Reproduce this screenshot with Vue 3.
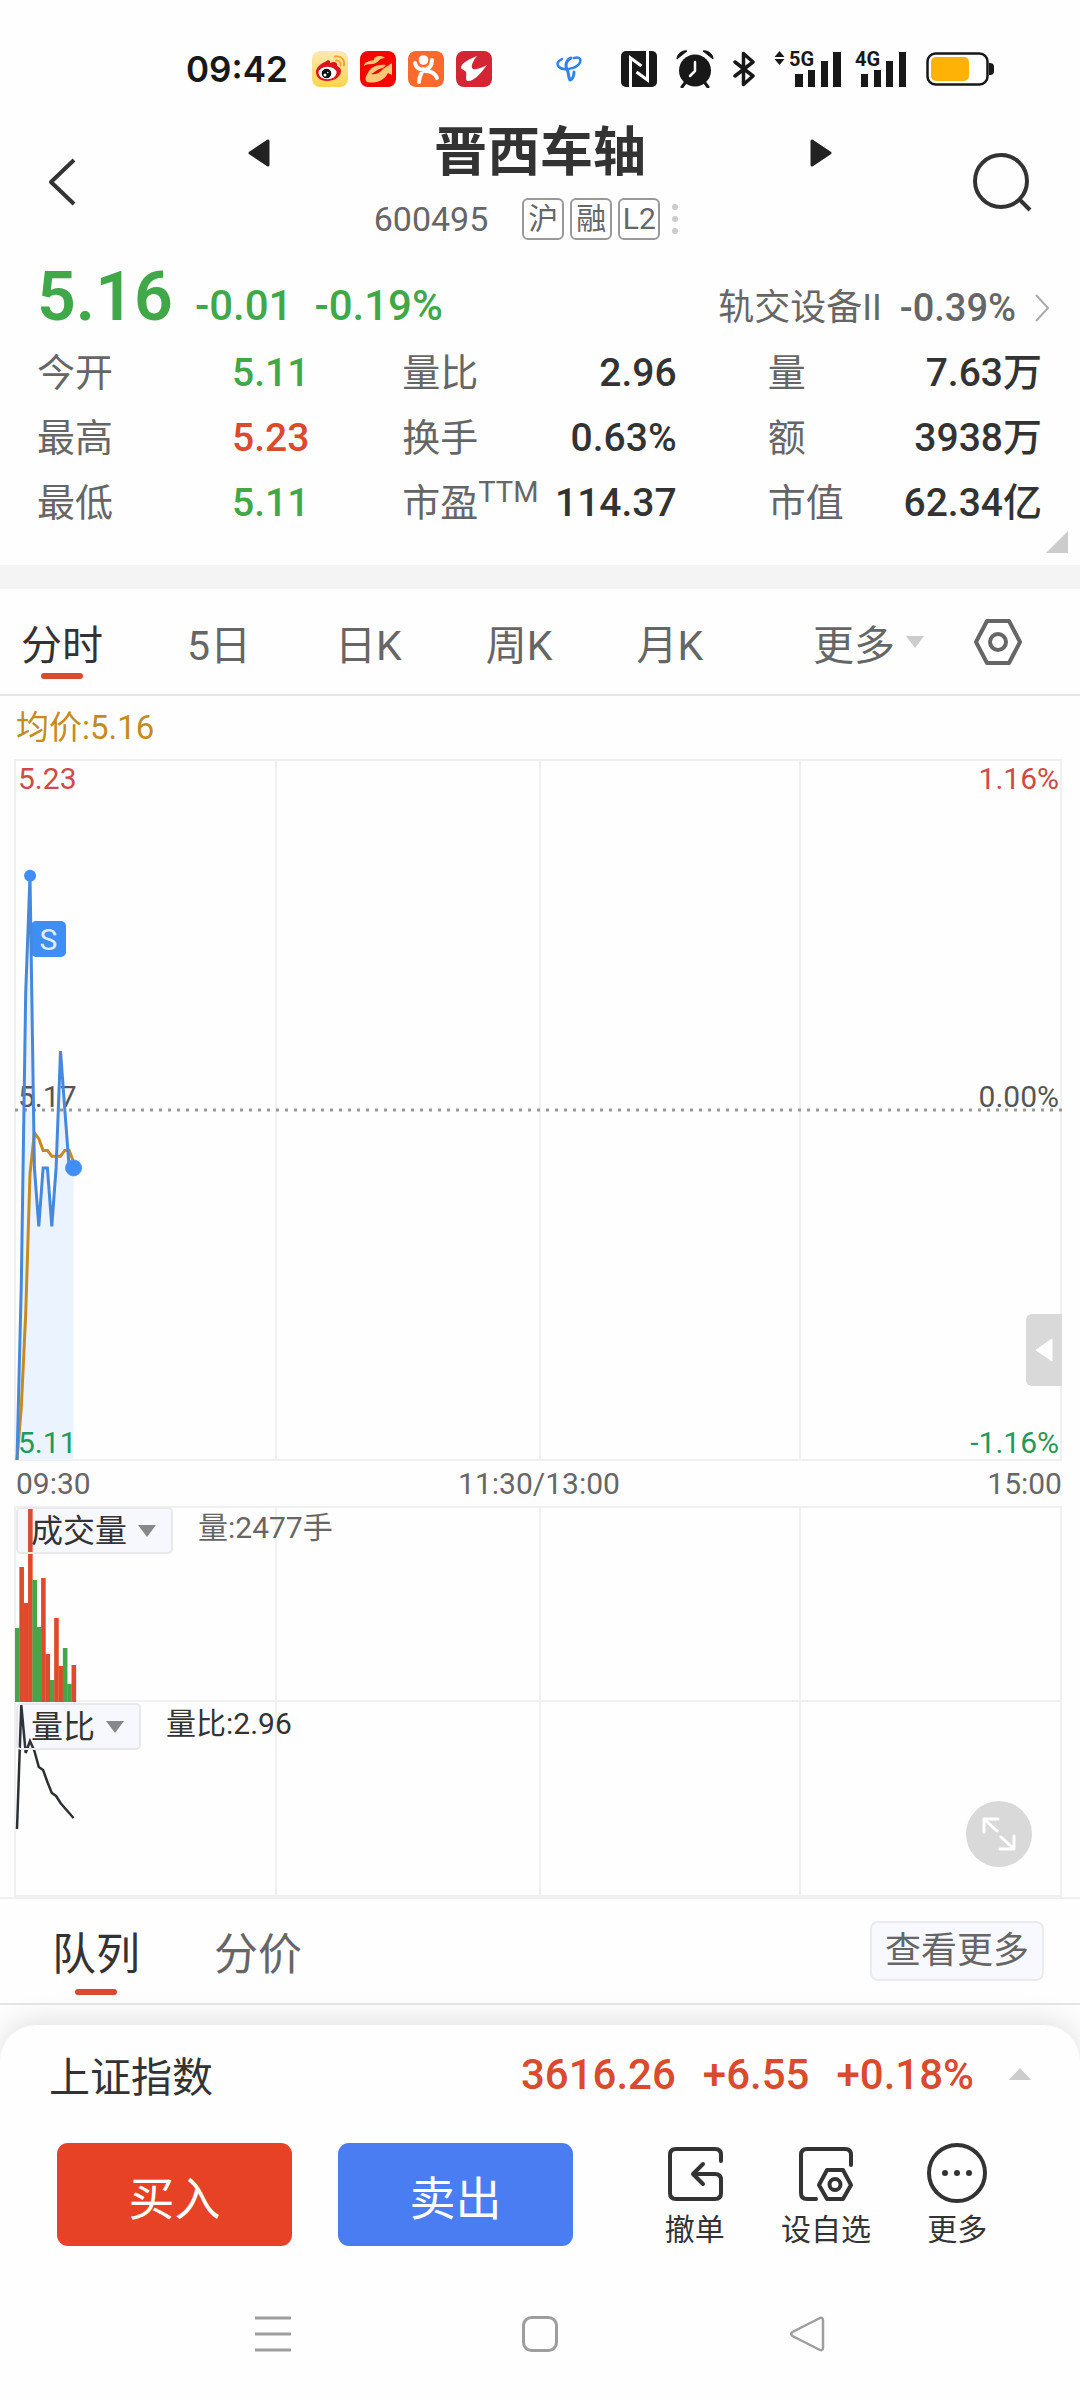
<script setup>
import { computed, ref } from 'vue'

const stats = [
  { label: '今开', value: '5.11', tone: 'down' },
  { label: '量比', value: '2.96' },
  { label: '量', value: '7.63万' },
  { label: '最高', value: '5.23', tone: 'up' },
  { label: '换手', value: '0.63%' },
  { label: '额', value: '3938万' },
  { label: '最低', value: '5.11', tone: 'down' },
  { label: '市盈', sup: 'TTM', value: '114.37' },
  { label: '市值', value: '62.34亿' },
]

const periods = ['分时', '5日', '日K', '周K', '月K']
const activePeriod = ref('分时')

const bookTabs = ['队列', '分价']
const activeBook = ref('队列')

const volumeIndicator = ref('成交量')
const ratioIndicator = ref('量比')

// one entry per minute since the open
const prices = [5.11, 5.14, 5.19, 5.21, 5.16, 5.15, 5.16, 5.16, 5.15, 5.16, 5.18, 5.17, 5.16, 5.16]
const averages = [5.11, 5.119, 5.135, 5.159, 5.166, 5.165, 5.163, 5.163, 5.162, 5.162, 5.162, 5.163, 5.163, 5.161]
const volumes = [
  [74, 'down'], [135, 'up'], [99, 'up'], [194, 'up'], [122, 'down'], [75, 'down'], [124, 'up'],
  [48, 'up'], [22, 'down'], [84, 'up'], [36, 'up'], [54, 'down'], [18, 'down'], [37, 'up'],
]
const ratios = [127, 3, 51, 39, 49, 65, 68, 80, 91, 94, 101, 106, 111, 116]

const STEP = 4.35
const gridX = [1, 262, 526, 786, 1047]

const px = (i) => 3 + i * STEP
const py = (price) => 701 - ((price - 5.11) / 0.12) * 701
const toPoints = (list, fy) => list.map((v, i) => `${px(i).toFixed(1)},${fy(v).toFixed(1)}`).join(' ')

const pricePoints = computed(() => toPoints(prices, py))
const averagePoints = computed(() => toPoints(averages, py))
const areaPoints = computed(() => `${px(0)},701 ${pricePoints.value} ${px(prices.length - 1)},701`)
const ratioPoints = computed(() => toPoints(ratios, (v) => v))
</script>

<template>
  <div class="page">
    <div class="status-bar">
      <span class="clock">09:42</span>
      <div class="app-icons">
        <svg viewBox="0 0 36 36" class="app-icon">
          <defs>
            <linearGradient id="weibo" x1="0" y1="0" x2="0" y2="1">
              <stop offset="0" stop-color="#fbe9b4" />
              <stop offset="1" stop-color="#fdd44c" />
            </linearGradient>
          </defs>
          <rect width="36" height="36" rx="8" fill="url(#weibo)" />
          <path d="M13 11c3-3 6-2 5 1c4-2 8-1 7 3c3 1 4 3 4 5c0 6-7 10-14 10S4 26 4 21c0-4 4-8 9-10z" fill="#d8141c" />
          <ellipse cx="15.500" cy="22" rx="9" ry="6.200" fill="#fff" />
          <circle cx="14.500" cy="22.500" r="4.800" fill="#111" />
          <circle cx="13" cy="24" r="1.500" fill="#fff" />
          <circle cx="15.800" cy="21.500" r=".8" fill="#fff" />
          <path d="M24 9.500c3-.5 5 2 4.500 5M23 5.500c7-1 10 4 9 9" fill="none" stroke="#f0a22c" stroke-width="1.800" stroke-linecap="round" />
        </svg>
        <svg viewBox="0 0 36 36" class="app-icon">
          <rect width="36" height="36" rx="8" fill="#f80400" />
          <path d="M4 15c0-4 5-5 10-6c0-3 3-4 6-4c3 0 4 1 5 2c-5 0-6 3-9 5c-4 2-8 0-12 3z" fill="#f9c877" />
          <path d="M8 22c2-5 8-9 18-8l-3 3c-4 0-8 4-12 6c3 1 8 0 12-5l9-6v12l-4-2c-4 8-13 11-21 9c-2-2-2-5 1-9z" fill="#f9c877" />
        </svg>
        <svg viewBox="0 0 36 36" class="app-icon">
          <rect width="36" height="36" rx="8" fill="#fb6a2c" />
          <circle cx="15.500" cy="9" r="4.800" fill="#fff" />
          <path d="M7 12c1 5 4 6 9 7c5-1 8-4 8-10M15 18c-1 5-4 6-4 13M17 20c6 0 10 2 12 7" fill="none" stroke="#fff" stroke-width="4" stroke-linecap="round" stroke-linejoin="round" />
        </svg>
        <svg viewBox="0 0 36 36" class="app-icon">
          <rect width="36" height="36" rx="8" fill="#d32533" />
          <path d="M21 5C13 8 6 12 5 16c0 3 4 3 5 5c1 3-1 6 1 9c7 1 15-9 20-16c-4 2-10 5-14 4c-3-2 0-8 4-13z" fill="#fff" />
        </svg>
      </div>
      <svg viewBox="0 0 26 26" class="telecom">
        <path d="M18 2c6-2 8 2 5 6c-4 5-16 7-20 3C0 8 2 5 6 3" fill="none" stroke="#2d84ee" stroke-width="2.500" stroke-linecap="round" />
        <path d="M15 2c-5 2-6 8-4 11c2 4 1 8 3 11c3-1 4-4 4-8" fill="none" stroke="#2d84ee" stroke-width="3" stroke-linecap="round" stroke-linejoin="round" />
      </svg>
      <div class="system-icons">
        <svg viewBox="0 0 36 36" class="app-icon">
          <rect width="36" height="36" rx="5" fill="#181818" />
          <path d="M9.500 36V7l11 8M26.500 0v29l-11-8" fill="none" stroke="#fff" stroke-width="3" />
        </svg>
        <svg viewBox="0 0 38 38" class="alarm">
          <circle cx="19" cy="20.500" r="16" fill="#181818" />
          <path d="M1 9C1 4 6 0 11 1zM37 9c0-5-5-9-10-8z" fill="#181818" stroke="#181818" stroke-width="1" />
          <path d="M9 33l-3 4M29 33l3 4" stroke="#181818" stroke-width="3" stroke-linecap="round" />
          <path d="M19 12v9l-5 5" fill="none" stroke="#fff" stroke-width="2.500" stroke-linecap="round" />
        </svg>
        <svg viewBox="0 0 22 36" class="bluetooth">
          <path d="M2 11l18 14l-9.500 8.500v-31L20 11L2 25" fill="none" stroke="#181818" stroke-width="3.500" stroke-linejoin="round" stroke-linecap="round" />
        </svg>
        <div class="signals">
          <svg viewBox="0 -4 68 46" class="signal-5g">
            <path d="M5.500 1l5 6h-10zM5.500 15l5-6h-10z" fill="#181818" />
            <text x="15" y="16" class="network">5G</text>
            <path d="M21 24h8v13h-8zM34 20h7v17h-7zM47 11h7v26h-7zM59 2h8v35h-8z" fill="#181818" />
          </svg>
          <svg viewBox="0 -4 52 46" class="signal-4g">
            <text x="0" y="16" class="network">4G</text>
            <path d="M6 24h7v13H6zM19 20h7v17h-7zM31 11h7v26h-7zM44 2h7v35h-7z" fill="#181818" />
          </svg>
        </div>
        <svg viewBox="0 0 68 34" class="battery">
          <rect x="1.500" y="1.500" width="60" height="31" rx="8" fill="#fff" stroke="#181818" stroke-width="2.500" />
          <path d="M63 11c5 0 5 2 5 6s0 6-5 6z" fill="#181818" />
          <rect x="5" y="5" width="38" height="24" rx="5" fill="#fdb205" />
        </svg>
      </div>
    </div>

    <header class="header">
      <button class="icon-btn back" aria-label="返回">
        <svg viewBox="0 0 28 48" width="28" height="48">
          <path d="M26 2L3 24l23 22" fill="none" stroke="#333" stroke-width="4" stroke-linejoin="round" />
        </svg>
      </button>
      <div class="stock">
        <div class="stock-title">
          <button class="icon-btn" aria-label="上一只">
            <svg viewBox="0 0 22 28" width="22" height="28"><path d="M20 2v24L2 14z" fill="#222" stroke="#222" stroke-width="3" stroke-linejoin="round" /></svg>
          </button>
          <h1>晋西车轴</h1>
          <button class="icon-btn" aria-label="下一只">
            <svg viewBox="0 0 22 28" width="22" height="28"><path d="M2 2v24l18-12z" fill="#222" stroke="#222" stroke-width="3" stroke-linejoin="round" /></svg>
          </button>
        </div>
        <div class="stock-meta">
          <span class="code">600495</span>
          <span class="tag">沪</span>
          <span class="tag">融</span>
          <span class="tag">L2</span>
          <span class="dots"><i></i><i></i><i></i></span>
        </div>
      </div>
      <button class="icon-btn search" aria-label="搜索">
        <svg viewBox="0 0 60 60" width="60" height="60">
          <circle cx="29" cy="29" r="26" fill="none" stroke="#333" stroke-width="4" />
          <path d="M47 47l11 11" stroke="#333" stroke-width="4" />
        </svg>
      </button>
    </header>

    <section class="quote">
      <div class="quote-main">
        <strong class="price">5.16</strong>
        <span class="change">-0.01</span>
        <span class="change">-0.19%</span>
        <a href="#" class="sector">
          <span>轨交设备II</span>
          <span class="sector-change">-0.39%</span>
          <svg viewBox="0 0 16 28" width="16" height="28"><path d="M2 1l12 13L2 27" fill="none" stroke="#aaa" stroke-width="2" /></svg>
        </a>
      </div>
      <dl class="stats">
        <div v-for="item in stats" :key="item.label" class="stat">
          <dt>{{ item.label }}<sup v-if="item.sup">{{ item.sup }}</sup></dt>
          <dd :class="item.tone">{{ item.value }}</dd>
        </div>
      </dl>
      <svg class="corner" viewBox="0 0 22 22"><path d="M22 0v22H0z" fill="#ccc" /></svg>
    </section>

    <nav class="periods">
      <button
        v-for="period in periods"
        :key="period"
        class="tab"
        :class="{ active: period === activePeriod }"
        @click="activePeriod = period"
      >{{ period }}</button>
      <button class="tab more">
        更多
        <svg viewBox="0 0 18 12" width="18" height="12"><path d="M0 0h18L9 12z" fill="#ccc" /></svg>
      </button>
      <button class="icon-btn" aria-label="设置">
        <svg viewBox="0 0 48 48" width="48" height="48">
          <path d="M13 3h22l11 21l-11 21H13L2 24z" fill="none" stroke="#666" stroke-width="4" stroke-linejoin="round" />
          <circle cx="24" cy="24" r="8" fill="none" stroke="#666" stroke-width="4" />
        </svg>
      </button>
    </nav>

    <section class="chart">
      <div class="average">均价:5.16</div>

      <div class="pane price-pane">
        <svg class="plot" viewBox="0 0 1048 702" preserveAspectRatio="none">
          <path d="M0 1H1048M0 701H1048" class="grid-line" />
          <path v-for="x in gridX" :key="x" :d="`M${x} 0V702`" class="grid-line" />
          <polygon :points="areaPoints" fill="#ebf4fe" />
        </svg>
        <span class="axis top left up-text">5.23</span>
        <span class="axis top right up-text">1.16%</span>
        <span class="axis middle left">5.17</span>
        <span class="axis middle right">0.00%</span>
        <span class="axis bottom left down-text">5.11</span>
        <span class="axis bottom right down-text">-1.16%</span>
        <span class="trade-mark">S</span>
        <svg class="plot" viewBox="0 0 1048 702" preserveAspectRatio="none">
          <path d="M1 351H1048" stroke="#999" stroke-width="3" stroke-dasharray="3 6" />
          <polyline :points="averagePoints" fill="none" stroke="#c58b1e" stroke-width="3" />
          <polyline :points="pricePoints" fill="none" stroke="#4688de" stroke-width="3" />
          <circle :cx="px(3)" :cy="py(5.21)" r="6" fill="#3e8ef5" />
          <circle :cx="px(13)" :cy="py(5.16)" r="8" fill="#3e8ef5" stroke="#5b96e4" stroke-width="1" />
        </svg>
        <button class="drawer" aria-label="展开盘口">
          <svg viewBox="0 0 18 24" width="18" height="24"><path d="M17 1v22L1 12z" fill="#fff" stroke="#fff" stroke-linejoin="round" /></svg>
        </button>
      </div>

      <div class="times">
        <span>09:30</span>
        <span>11:30/13:00</span>
        <span>15:00</span>
      </div>

      <div class="pane volume-pane">
        <svg class="plot" viewBox="0 0 1048 196" preserveAspectRatio="none">
          <path d="M0 1H1048M0 195H1048" class="grid-line" />
          <path v-for="x in gridX" :key="x" :d="`M${x} 0V196`" class="grid-line" />
          <rect
            v-for="(bar, i) in volumes"
            :key="i"
            :x="1 + i * STEP"
            :y="196 - bar[0]"
            width="4.6"
            :height="bar[0]"
            :fill="bar[1] === 'up' ? '#e04a2c' : '#44a648'"
          />
        </svg>
        <div class="indicator">
          <div class="picker">
            <select v-model="volumeIndicator" aria-label="成交量指标">
              <option>成交量</option>
            </select>
            <svg viewBox="0 0 18 12" width="18" height="12"><path d="M0 0h18L9 12z" fill="#888" /></svg>
          </div>
          <span class="reading">量:2477手</span>
        </div>
      </div>

      <div class="pane ratio-pane">
        <svg class="plot" viewBox="0 0 1048 195" preserveAspectRatio="none">
          <path d="M0 194H1048" class="grid-line" />
          <path v-for="x in gridX" :key="x" :d="`M${x} 0V195`" class="grid-line" />
          <polyline :points="ratioPoints" fill="none" stroke="#2c3033" stroke-width="2.500" />
        </svg>
        <div class="indicator">
          <div class="picker">
            <select v-model="ratioIndicator" aria-label="量比指标">
              <option>量比</option>
            </select>
            <svg viewBox="0 0 18 12" width="18" height="12"><path d="M0 0h18L9 12z" fill="#888" /></svg>
          </div>
          <span class="reading dark">量比:2.96</span>
        </div>
        <button class="expand" aria-label="全屏">
          <svg viewBox="0 0 34 34" width="34" height="34">
            <path d="M2 15V2h14M2 2l13 12M32 19v13H18M32 32L19 20" fill="none" stroke="#fff" stroke-width="3" stroke-linecap="round" stroke-linejoin="round" />
          </svg>
        </button>
      </div>
    </section>

    <nav class="book">
      <button
        v-for="name in bookTabs"
        :key="name"
        class="tab"
        :class="{ active: name === activeBook }"
        @click="activeBook = name"
      >{{ name }}</button>
      <button class="see-more">查看更多</button>
    </nav>

    <footer class="dock">
      <div class="index">
        <span class="index-name">上证指数</span>
        <span class="index-value">3616.26</span>
        <span class="index-value">+6.55</span>
        <span class="index-value">+0.18%</span>
        <svg viewBox="0 0 22 12" width="22" height="12"><path d="M0 12h22L11 0z" fill="#ccc" /></svg>
      </div>
      <div class="actions">
        <button class="trade buy">买入</button>
        <button class="trade sell">卖出</button>
        <div class="tools">
          <button class="tool">
            <svg viewBox="0 0 60 60" width="60" height="60">
              <path d="M56 18v-6q0-6-6-6H11q-6 0-6 6v38q0 6 6 6h39q6 0 6-6V37q0-6-6-6H28M38 21L28 31l10 10" fill="none" stroke="#333" stroke-width="4" stroke-linecap="round" stroke-linejoin="round" />
            </svg>
            撤单
          </button>
          <button class="tool">
            <svg viewBox="0 0 60 60" width="60" height="60">
              <path d="M55 22V12q0-6-6-6H11q-6 0-6 6v38q0 6 6 6h9" fill="none" stroke="#333" stroke-width="4" stroke-linecap="round" />
              <path d="M31 27h16l8 15l-8 14H31l-8-14z" fill="none" stroke="#333" stroke-width="4" stroke-linejoin="round" />
              <circle cx="39" cy="41.500" r="5.500" fill="none" stroke="#333" stroke-width="4" />
            </svg>
            设自选
          </button>
          <button class="tool">
            <svg viewBox="0 0 60 60" width="60" height="60">
              <circle cx="30" cy="30" r="28" fill="none" stroke="#333" stroke-width="4" />
              <circle cx="18" cy="30" r="3" fill="#333" />
              <circle cx="30" cy="30" r="3" fill="#333" />
              <circle cx="42" cy="30" r="3" fill="#333" />
            </svg>
            更多
          </button>
        </div>
      </div>
      <div class="system-nav">
        <button class="icon-btn" aria-label="最近任务">
          <svg viewBox="0 0 36 36" width="36" height="36"><path d="M0 2h36M0 18h36M0 34h36" stroke="#9e9e9e" stroke-width="3" /></svg>
        </button>
        <button class="icon-btn" aria-label="主屏幕">
          <svg viewBox="0 0 36 36" width="36" height="36"><rect x="1.500" y="1.500" width="33" height="33" rx="8" fill="none" stroke="#9e9e9e" stroke-width="3" /></svg>
        </button>
        <button class="icon-btn" aria-label="返回上级">
          <svg viewBox="0 0 36 36" width="36" height="36"><path d="M30 2.500q4-2 4 2v27q0 4-4 2L3.500 20q-3-2 0-4z" fill="none" stroke="#9e9e9e" stroke-width="2.500" /></svg>
        </button>
      </div>
    </footer>
  </div>
</template>

<style>
body { background: #fefefe; }
</style>

<style scoped>
.page { font-family: Roboto, "Noto Sans CJK SC", sans-serif; color: #333; background: #fefefe; overflow: hidden; }
.page svg { display: block; flex: none; }
button { font: inherit; color: inherit; border: none; background: none; padding: 0; cursor: pointer; }
.icon-btn { display: flex; align-items: center; }

/* status bar */
.status-bar { display: flex; align-items: center; height: 94px; padding: 22px 86px 0 186px; }
.clock { font-family: Inter, sans-serif; font-size: 35px; font-weight: 600; color: #181818; }
.app-icons { display: flex; gap: 12px; margin-left: 24px; }
.app-icon { width: 36px; height: 36px; }
.telecom { width: 26px; height: 26px; margin-left: 64px; }
.system-icons { display: flex; align-items: center; gap: 19px; margin-left: auto; }
.signals { display: flex; gap: 13px; }
.alarm { width: 38px; height: 38px; }
.bluetooth { width: 22px; height: 36px; }
.signal-5g { width: 68px; height: 46px; }
.signal-4g { width: 52px; height: 46px; }
.battery { width: 68px; height: 34px; }
.network { font-size: 20px; font-weight: 700; fill: #181818; }

/* header */
.header { display: grid; grid-template-columns: 1fr 54% 1fr; align-items: center; }
.back { padding-left: 48px; }
.search { justify-self: end; padding-right: 48px; }
.stock-title { display: flex; align-items: center; justify-content: space-between; height: 74px; }
.stock-title h1 { margin: 0; font-size: 53px; line-height: 74px; font-weight: 700; }
.stock-meta { display: flex; align-items: center; justify-content: center; gap: 6px; height: 58px; padding-right: 28px; color: #666; }
.code { font-size: 34px; margin-right: 28px; }
.tag { box-sizing: border-box; min-width: 42px; height: 42px; border: 2px solid #999; border-radius: 6px; font-size: 30px; line-height: 38px; text-align: center; }
.dots { display: flex; flex-direction: column; gap: 6px; margin-left: 6px; }
.dots i { width: 6px; height: 6px; border-radius: 50%; background: #ccc; }

/* quote */
.quote { position: relative; padding: 6px 38px 29px 37px; border-bottom: 24px solid #f4f4f4; }
.quote-main { display: flex; align-items: baseline; gap: 22px; line-height: 48px; color: #41a849; }
.price { font-size: 68px; line-height: 87px; font-weight: 600; }
.change { font-size: 42px; font-weight: 500; }
.sector { display: flex; align-items: center; gap: 18px; margin-left: auto; margin-right: -8px; font-size: 36px; color: #666; text-decoration: none; }
.sector-change { font-size: 38px; font-weight: 500; }
.stats { display: grid; grid-template-columns: repeat(3, 1fr); column-gap: 91px; margin: 0; }
.stat { display: flex; justify-content: space-between; height: 65px; line-height: 65px; white-space: nowrap; }
.stat dt { font-size: 38px; color: #666; }
.stat dt sup { font-size: 29px; line-height: 29px; vertical-align: 14px; }
.stat dd { margin: 0; font-size: 39px; font-weight: 500; }
.stat:nth-child(3n + 1) { justify-content: flex-start; }
.stat:nth-child(3n + 1) dt { flex: 0 0 195px; }
.stat .up { color: #d94a2e; }
.stat .down { color: #41a849; }
.corner { position: absolute; right: 12px; bottom: 12px; width: 22px; height: 22px; }

/* tabs */
.periods { display: flex; align-items: center; gap: 84px; height: 105px; padding: 0 58px 0 21px; border-bottom: 2px solid #e6e6e6; }
.tab { position: relative; height: 100%; font-size: 41px; color: #666; white-space: nowrap; }
.tab.active { color: #333; }
.tab.active::after { content: ""; position: absolute; left: 50%; bottom: 15px; width: 42px; height: 6px; margin-left: -21px; border-radius: 3px; background: #d94a2e; }
.more { display: flex; align-items: center; gap: 11px; margin-left: auto; margin-right: -34px; }

/* chart */
.chart { padding: 0 18px 0 14px; border-bottom: 2px solid #f0f0f0; }
.average { padding-left: 2px; font-size: 33px; line-height: 63px; color: #c58b1e; }
.pane { position: relative; }
.price-pane { height: 702px; }
.volume-pane { height: 196px; }
.ratio-pane { height: 195px; }
.plot { position: absolute; inset: 0; width: 100%; height: 100%; }
.grid-line { stroke: #f0f0f0; stroke-width: 2; }
.axis { position: absolute; font-size: 30px; line-height: 36px; color: #555; }
.top { top: 2px; }
.middle { top: 320px; }
.bottom { bottom: 0; }
.left { left: 4px; }
.right { right: 3px; }
.up-text { color: #cf4a48; }
.down-text { color: #22995c; }
.trade-mark { position: absolute; left: 17px; top: 162px; width: 35px; height: 36px; border-radius: 5px; background: #3e8ef5; color: #e4effd; font-size: 30px; line-height: 38px; text-align: center; }
.drawer { position: absolute; right: 0; top: 555px; display: flex; align-items: center; justify-content: center; width: 36px; height: 72px; border-radius: 6px 0 0 6px; background: #d9d9d9; }
.times { display: flex; justify-content: space-between; padding-left: 2px; font-size: 30px; line-height: 46px; height: 45px; color: #666; }
.indicator { position: relative; display: flex; align-items: flex-start; gap: 25px; padding: 1px 2px; }
.picker { position: relative; display: flex; align-items: center; }
.picker select { appearance: none; height: 47px; padding: 0 43px 0 13px; border: 2px solid #e9e9ec; border-radius: 5px; background: rgba(80, 110, 255, 0.04); color: #333; font: inherit; font-size: 32px; }
.picker svg { position: absolute; right: 17px; pointer-events: none; }
.reading { font-size: 30px; line-height: 42px; color: #666; }
.reading.dark { color: #333; }
.expand { position: absolute; right: 30px; bottom: 30px; display: flex; align-items: center; justify-content: center; width: 66px; height: 66px; border-radius: 50%; background: #d9d9d9; }

/* order book tabs */
.book { display: flex; align-items: center; gap: 74px; height: 104px; padding: 0 36px 0 52px; border-bottom: 2px solid #e6e6e6; }
.book .tab { font-size: 44px; }
.book .tab.active::after { bottom: 8px; }
.see-more { height: 60px; margin-left: auto; padding: 0 13px; border: 2px solid #ebebee; border-radius: 8px; background: #f8f9fe; color: #666; font-size: 36px; line-height: 52px; }

/* bottom dock */
.dock { position: relative; margin-top: 20px; border-radius: 36px 36px 0 0; background: #fefefe; box-shadow: 0 -4px 30px rgba(0, 0, 0, 0.12); }
.index { display: flex; align-items: center; gap: 27px; height: 98px; padding: 0 49px; }
.index-name { margin-right: auto; font-size: 41px; }
.index-value { font-size: 42px; font-weight: 500; color: #d94a2e; }
.index svg { margin-left: 8px; }
.actions { display: flex; padding: 20px 57px 21px; }
.trade { flex: 235 1 0; height: 103px; border-radius: 11px; color: #fff; font-size: 46px; }
.buy { background: #e84226; }
.sell { margin-left: 46px; background: #4b7df2; }
.tools { flex: 394 1 0; display: grid; grid-template-columns: repeat(3, 1fr); margin-left: 56px; }
.tool { display: flex; flex-direction: column; align-items: center; gap: 10px; font-size: 30px; line-height: 34px; }
.system-nav { display: flex; justify-content: space-between; align-items: center; height: 132px; padding: 0 255px; }
</style>
